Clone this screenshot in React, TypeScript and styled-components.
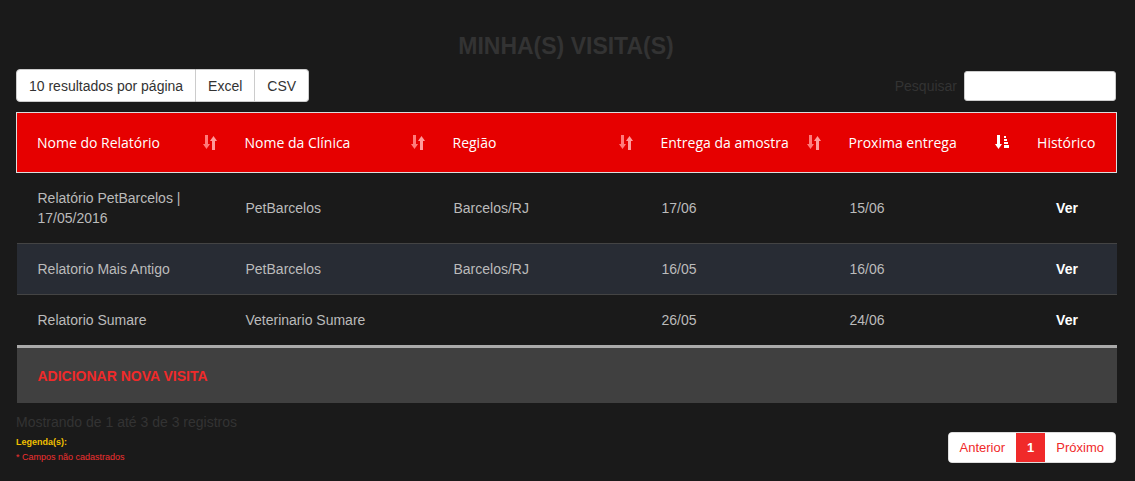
import React from 'react';
import styled, { createGlobalStyle } from 'styled-components';

const GlobalStyle = createGlobalStyle`
  html, body {
    margin: 0;
    padding: 0;
    background-color: #1a1a1a;
  }
  body {
    font-family: 'Liberation Sans', Arial, sans-serif;
    font-size: 14px;
  }
`;

interface Visit {
  report: string;
  clinic: string;
  region: string;
  delivery: string;
  next: string;
}

const visits: Visit[] = [
  {
    report: 'Relatório PetBarcelos | 17/05/2016',
    clinic: 'PetBarcelos',
    region: 'Barcelos/RJ',
    delivery: '17/06',
    next: '15/06',
  },
  {
    report: 'Relatorio Mais Antigo',
    clinic: 'PetBarcelos',
    region: 'Barcelos/RJ',
    delivery: '16/05',
    next: '16/06',
  },
  {
    report: 'Relatorio Sumare',
    clinic: 'Veterinario Sumare',
    region: '',
    delivery: '26/05',
    next: '24/06',
  },
];

const Page = styled.div`
  padding: 0 19px 0 16px;
`;

const Title = styled.h2`
  margin: 0;
  padding-top: 33px;
  height: 36px;
  text-align: center;
  font-size: 23px;
  font-weight: bold;
  line-height: 26px;
  color: #333333;
`;

const Toolbar = styled.div`
  display: flex;
  justify-content: space-between;
  align-items: center;
  height: 33px;
  width: 1100px;
`;

const ButtonGroup = styled.div`
  display: flex;
`;

const GroupButton = styled.button`
  height: 33px;
  padding: 0 12px;
  background: #ffffff;
  border: 1px solid #cccccc;
  border-left-width: 0;
  font-family: 'Liberation Sans', Arial, sans-serif;
  font-size: 14px;
  color: #333333;

  &:first-child {
    border-left-width: 1px;
    border-radius: 4px 0 0 4px;
  }
  &:last-child {
    border-radius: 0 4px 4px 0;
  }
`;

const SearchLabel = styled.label`
  display: flex;
  align-items: center;
  gap: 7px;
  color: #333333;
  font-size: 14px;
`;

const SearchInput = styled.input`
  box-sizing: border-box;
  width: 152px;
  height: 30px;
  padding: 0 4px;
  border: 1px solid #cccccc;
  border-radius: 3px;
  background: #ffffff;
`;

const Table = styled.table`
  margin-top: 10px;
  width: 1100px;
  border-collapse: collapse;
  table-layout: fixed;
  font-family: 'Liberation Sans', Arial, sans-serif;
`;

const Col = styled.col<{ $width: number }>`
  width: ${(p) => p.$width}px;
`;

const HeadRow = styled.tr`
  background-color: #e60000;
  border: 1px solid #dddddd;
`;

const Th = styled.th<{ $center?: boolean }>`
  height: 59px;
  padding: 0 7px 0 ${(p) => (p.$center ? 7 : 20)}px;
  font-family: 'Open Sans', sans-serif;
  font-weight: normal;
  font-size: 14px;
  color: #ffffff;
  text-align: ${(p) => (p.$center ? 'center' : 'left')};
`;

const HeadInner = styled.div`
  display: flex;
  align-items: center;
  justify-content: space-between;
`;

const Row = styled.tr<{ $striped?: boolean }>`
  background-color: ${(p) => (p.$striped ? '#282c34' : '#1a1a1a')};
  border-top: 1px solid #444444;

  &:first-child {
    border-top: none;
  }
`;

const Td = styled.td<{ $strong?: boolean }>`
  padding: 15px 20px 15px 21px;
  line-height: 20px;
  font-family: 'Liberation Sans', Arial, sans-serif;
  font-size: 14px;
  color: ${(p) => (p.$strong ? '#ffffff' : '#bbbbbb')};
  text-align: ${(p) => (p.$strong ? 'center' : 'left')};
  font-weight: ${(p) => (p.$strong ? 'bold' : 'normal')};
  vertical-align: middle;
`;

const FirstTd = styled(Td)`
  padding-right: 40px;
`;

const FootRow = styled.tr`
  background-color: #404040;
  border-top: 3px solid #aaaaaa;
`;

const FootCell = styled.td`
  height: 55px;
  padding: 0 21px;
  font-size: 14px;
  font-weight: bold;
  color: #f02a2a;
  vertical-align: middle;
`;

const Bottom = styled.div`
  display: flex;
  justify-content: space-between;
  align-items: flex-start;
  width: 1100px;
`;

const Info = styled.div`
  display: flex;
  flex-direction: column;
`;

const Showing = styled.div`
  margin-top: 10px;
  font-size: 14px;
  color: #333333;
  line-height: 18px;
`;

const LegendTitle = styled.div`
  margin-top: 4px;
  font-size: 9px;
  font-weight: bold;
  color: #f0c000;
  line-height: 14px;
`;

const LegendItem = styled.div`
  margin-top: 1px;
  font-size: 9px;
  color: #f03030;
  line-height: 14px;
`;

const Pagination = styled.div`
  display: flex;
  margin-top: 29px;
  border: 1px solid #dddddd;
  border-radius: 4px;
  overflow: hidden;
  background: #ffffff;
`;

const PageLink = styled.span<{ $active?: boolean }>`
  display: flex;
  align-items: center;
  height: 29px;
  padding: 0 11px;
  font-size: 13px;
  background: ${(p) => (p.$active ? '#f02a2a' : '#ffffff')};
  color: ${(p) => (p.$active ? '#ffffff' : '#f02a2a')};
  font-weight: ${(p) => (p.$active ? 'bold' : 'normal')};
`;

const SortIcon = ({ active }: { active?: boolean }) => {
  if (active) {
    return (
      <svg width="15" height="17" viewBox="0 0 15 17" fill="#ffffff">
        <rect x="2" y="1" width="3" height="10" />
        <polygon points="0,10 7,10 3.5,15" />
        <rect x="9" y="2" width="2" height="2" />
        <rect x="9" y="5" width="3" height="2" />
        <rect x="9" y="8" width="4" height="2" />
        <rect x="9" y="11" width="5" height="3" />
      </svg>
    );
  }
  return (
    <svg width="15" height="17" viewBox="0 0 15 17">
      <rect x="2" y="1" width="3" height="10" fill="#ff7a7a" />
      <polygon points="0,10 7,10 3.5,15" fill="#ff7a7a" />
      <rect x="9" y="6" width="3" height="10" fill="#ff9a9a" />
      <polygon points="7,7 14,7 10.5,2" fill="#ff9a9a" />
    </svg>
  );
};

const columns = [
  { label: 'Nome do Relatório', width: 208 },
  { label: 'Nome da Clínica', width: 208 },
  { label: 'Região', width: 208 },
  { label: 'Entrega da amostra', width: 188 },
  { label: 'Proxima entrega', width: 188, active: true },
];

const App = () => {
  return (
    <Page>
      <GlobalStyle />
      <Title>MINHA(S) VISITA(S)</Title>
      <Toolbar>
        <ButtonGroup>
          <GroupButton>10 resultados por página</GroupButton>
          <GroupButton>Excel</GroupButton>
          <GroupButton>CSV</GroupButton>
        </ButtonGroup>
        <SearchLabel>
          Pesquisar
          <SearchInput type="search" />
        </SearchLabel>
      </Toolbar>
      <Table>
        <colgroup>
          {columns.map((col) => (
            <Col key={col.label} $width={col.width} />
          ))}
          <Col $width={100} />
        </colgroup>
        <thead>
          <HeadRow>
            {columns.map((col) => (
              <Th key={col.label}>
                <HeadInner>
                  {col.label}
                  <SortIcon active={col.active} />
                </HeadInner>
              </Th>
            ))}
            <Th $center>Histórico</Th>
          </HeadRow>
        </thead>
        <tbody>
          {visits.map((v, i) => (
            <Row key={v.report} $striped={i % 2 === 1}>
              <FirstTd>{v.report}</FirstTd>
              <Td>{v.clinic}</Td>
              <Td>{v.region}</Td>
              <Td>{v.delivery}</Td>
              <Td>{v.next}</Td>
              <Td $strong>Ver</Td>
            </Row>
          ))}
        </tbody>
        <tfoot>
          <FootRow>
            <FootCell colSpan={6}>ADICIONAR NOVA VISITA</FootCell>
          </FootRow>
        </tfoot>
      </Table>
      <Bottom>
        <Info>
          <Showing>Mostrando de 1 até 3 de 3 registros</Showing>
          <LegendTitle>Legenda(s):</LegendTitle>
          <LegendItem>* Campos não cadastrados</LegendItem>
        </Info>
        <Pagination>
          <PageLink>Anterior</PageLink>
          <PageLink $active>1</PageLink>
          <PageLink>Próximo</PageLink>
        </Pagination>
      </Bottom>
    </Page>
  );
};

export default App;
